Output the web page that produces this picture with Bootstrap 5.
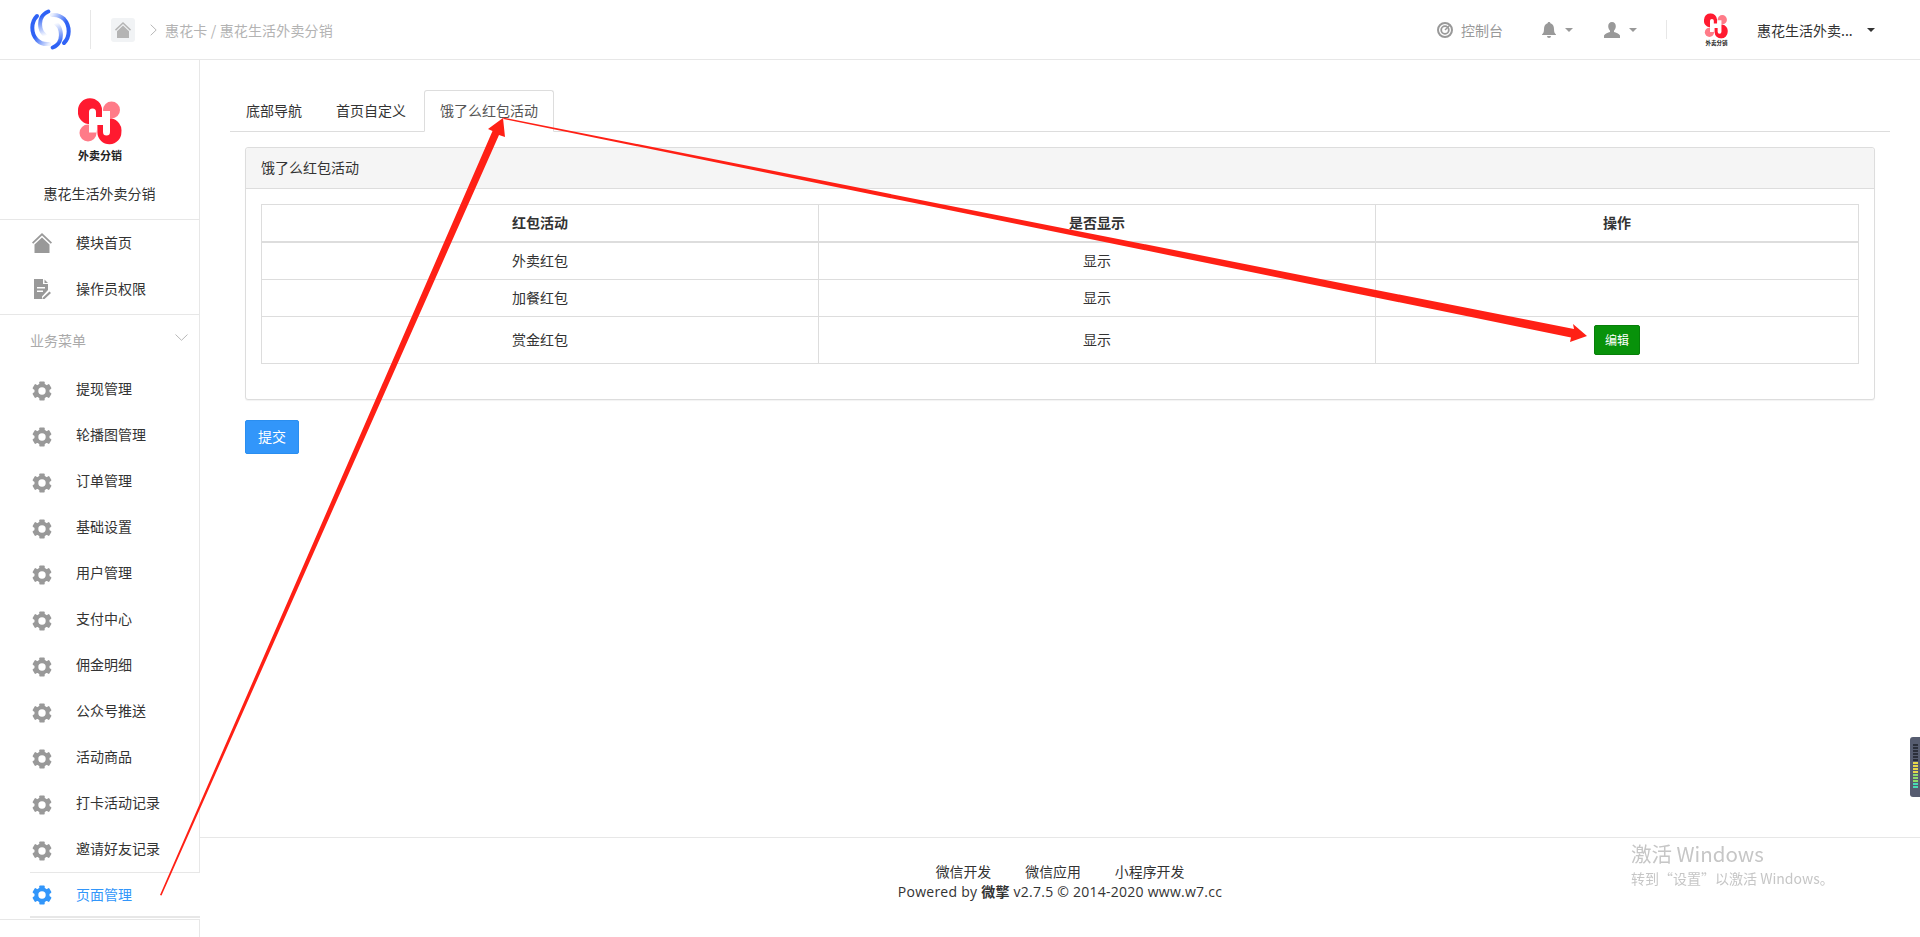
<!DOCTYPE html>
<html lang="zh-CN">
<head>
<meta charset="utf-8">
<title>饿了么红包活动</title>
<link href="https://cdn.jsdelivr.net/npm/bootstrap@5.3.0/dist/css/bootstrap.min.css" rel="stylesheet">
<style>
html,body{height:100%;overflow:hidden}
body{font:14px/20px "Noto Sans CJK SC","Liberation Sans",sans-serif;color:#333;background:#fff}
.top-bar{height:60px;border-bottom:1px solid #e7e7e7;padding:0;flex-wrap:nowrap;justify-content:flex-start}
.brand-wrap{width:61px;height:39px;margin-left:30px;border-right:1px solid #e7e7e7;flex:none}
.home-box{width:24px;height:24px;background:#f1f3f5;border-radius:3px;margin-left:20px}
.crumb{color:#b3b3b3;margin-left:8px;letter-spacing:.15px}
.chev{margin-left:15px}
.top-right{margin-left:auto;padding-right:45px}
.top-link{color:#999;font-size:14px}
.bell-ic{margin-left:39px}
.user-ic{margin-left:31px}
.tiny-caret{width:0;height:0;border-left:4px solid transparent;border-right:4px solid transparent;border-top:4px solid #999;margin-left:9px}
.tiny-caret.dark{border-top-color:#333;margin-left:15px}
.vsep{width:1px;height:19px;background:#e7e7e7;margin:0 36px 0 29px}
.acct-logo{width:27px;height:34px;position:relative}
.acct-name{margin-left:27px;width:95px;white-space:nowrap}
.shell{height:877px}
.side{width:200px;flex:none;display:flex;flex-direction:column}
.side-head{height:160px;border-right:1px solid #e7e7e7;border-bottom:1px solid #e7e7e7;padding-top:38px;text-align:center}
.side-logo{display:block;margin:0 auto 19px}
.side-top{height:95px;border-right:1px solid #e7e7e7;border-bottom:1px solid #e7e7e7}
.side-row{height:46px;display:flex;align-items:center;padding:0 0 2px 32px;color:#333;text-decoration:none}
.side-row svg{width:20px;height:20px;flex:none;margin-right:24px;fill:#999}
.side-top svg{margin-top:2px}
.side-group{height:51px;padding:15px 11px 0 30px;color:#aaa;border-right:1px solid #e7e7e7}
.side-list{border-right:1px solid #e7e7e7;height:506px}
.side-list svg{margin-top:5px}
.side-active{margin-left:30px;padding-left:2px;height:46px;border-top:1px solid #e7e7e7;border-bottom:2px solid #e7e7e7;color:#3296fa}
.side-active svg{fill:#3296fa;margin-top:3px}
.side-tail{flex:1;border-top:1px solid #e7e7e7;border-right:1px solid #e7e7e7;margin-top:1px}
.main-col{flex:1;min-width:0;display:flex;flex-direction:column}
.main-body{flex:1;padding:30px 30px 0 30px}
.tabs-bar{border-bottom:1px solid #ddd;margin-bottom:15px}
.tabs-bar .nav-link{padding:9px 15px 11px;margin-right:2px;margin-bottom:-1px;color:#333;border:1px solid transparent;border-radius:3px 3px 0 0;line-height:20px;height:42px}
.tabs-bar .nav-link.active{color:#555;border-color:#ddd #ddd #fff}
.tab-panel{margin:0 15px;border:1px solid #ddd;border-radius:3px;box-shadow:0 1px 1px rgba(0,0,0,.05)}
.tab-panel .card-header{background:#f5f5f5;border-bottom:1px solid #ddd;padding:9px 15px 11px;height:41px;line-height:20px;border-radius:3px 3px 0 0}
.tab-panel .card-body{padding:15px}
.act-table{margin-bottom:20px;table-layout:fixed;border-color:#ddd;color:#333;text-align:center}
.act-table th,.act-table td{padding:7px 8px 9px;line-height:20px;vertical-align:middle;border:1px solid #ddd;font-size:14px}
.act-table thead th{border-bottom:2px solid #ddd;font-weight:700}
.act-table td.edit-cell{padding:8px}
.c-a,.c-b{width:557px}
.edit-btn{background:#08920a;border:1px solid #077f09;color:#fff;font-size:12px;line-height:18px;padding:5px 10px;border-radius:2px}
.save-btn{background:#3296fa;border:1px solid #2a8ef0;color:#fff;font-size:14px;line-height:20px;padding:5px 12px 7px;border-radius:2px;margin:20px 0 0 15px;height:34px}
.foot{height:100px;border-top:1px solid #e7e7e7;text-align:center;padding-top:23px;font-family:"Open Sans","Noto Sans CJK SC",sans-serif;position:relative}
.foot-links{gap:34px;height:21px;line-height:20px;font-family:"Noto Sans CJK SC",sans-serif;font-size:13.9px;padding-left:0}
.foot-links a{color:#333;text-decoration:none}
.foot-copy{font-size:14px;letter-spacing:.25px}
.mark-layer{position:fixed;left:0;top:0;pointer-events:none}
.activate{position:fixed;left:1631px;top:840px;color:#c6c6c6;pointer-events:none}
.activate b{display:block;font-weight:400;font-size:20.5px;line-height:26px}
.activate span{display:block;font-size:14px;line-height:20px;margin-top:2px}
.meter{position:fixed;left:1910px;top:737px;width:10px;height:60px;background:#565c70;border-radius:3px 0 0 3px;padding:7px 2px 7px 3px;display:flex;flex-direction:column;gap:1px}
.meter i{display:block;height:2px;flex:none;background:#2b2f3b}
.meter i.y{background:#e6d84a}
.meter i.g{background:#8fdc6a}
.meter i.t{background:#47dcb4}
.logo-cap{font-size:11px;font-weight:700;fill:#222;font-family:"Noto Sans CJK SC",sans-serif}
.logo-cap-s{font-size:5.5px;font-weight:700;fill:#222;font-family:"Noto Sans CJK SC",sans-serif}
</style>
</head>
<body>
<svg width="0" height="0" class="d-block position-absolute">
<defs>
<symbol id="gear" viewBox="0 0 20 20">
  <circle cx="10" cy="10" r="7.600"/>
  <rect x="7.300" y=".4" width="5.400" height="4" rx=".8"/>
  <rect x="7.300" y=".4" width="5.400" height="4" rx=".8" transform="rotate(60 10 10)"/>
  <rect x="7.300" y=".4" width="5.400" height="4" rx=".8" transform="rotate(120 10 10)"/>
  <rect x="7.300" y=".4" width="5.400" height="4" rx=".8" transform="rotate(180 10 10)"/>
  <rect x="7.300" y=".4" width="5.400" height="4" rx=".8" transform="rotate(240 10 10)"/>
  <rect x="7.300" y=".4" width="5.400" height="4" rx=".8" transform="rotate(300 10 10)"/>
  <circle cx="10" cy="10" r="3.700" fill="#fff"/>
</symbol>
<symbol id="house" viewBox="0 0 20 20"><path d="M10 0 20 9.500l-1.200 1.300L10 2.500 1.200 10.800 0 9.500z"/><path d="M10 4.500 17.500 11.500V20h-15v-8.500z"/></symbol>
<symbol id="doc" viewBox="0 0 20 20"><path fill-rule="evenodd" d="M2 0h9v5h5v6l-6 6.500V20H2zM5 8v1.500h8V8zM5 11.500V13h6v-1.500z"/><path d="M12.500 .5 16 4h-3.500zM17.500 12.500l1.500 1.500-7 6.500h-1.500V19z"/></symbol>
<symbol id="flower" viewBox="0 0 44 47">
  <circle cx="33.500" cy="12" r="8.500" fill="#ff7b88"/>
  <circle cx="10" cy="35" r="8.500" fill="#ff7b88"/>
  <path d="M0 12.500A12 12 0 0 1 24 12V26H10A12 12 0 0 1 0 12.500z" fill="#ff1a30"/>
  <path d="M43.400 34A12 12 0 0 1 19.400 34.600V20.600H33.400A12 12 0 0 1 43.400 34z" fill="#ff1a30"/>
  <path d="M11 27V14a3.500 3.500 0 0 1 7 0v5h7v-6h7v21a3.500 3.500 0 0 1-7 0v-7h-7v7.500h-7z" fill="#fff"/>
</symbol>
<linearGradient id="sw1" x1="0" y1="0" x2="1" y2="1"><stop offset=".45" stop-color="#2f62f5"/><stop offset="1" stop-color="#2f62f5" stop-opacity=".1"/></linearGradient>
<linearGradient id="sw2" x1="0.500" y1="0" x2="0.600" y2="1"><stop offset=".15" stop-color="#2f62f5"/><stop offset="1" stop-color="#2f62f5" stop-opacity="0"/></linearGradient>
<g id="swirl-half" fill="none" stroke-linecap="round" stroke-width="4">
  <path d="M7 7C1 13 .5 24 7 31c3 3 7.500 4.500 12 4" stroke="url(#sw1)"/>
  <path d="M18.300 2.500C12 5 9 11 10.500 19c.5 3 2.500 6 5 8" stroke="url(#sw2)"/>
</g>
</defs>
</svg>

<nav class="navbar top-bar bg-white d-flex align-items-center">
  <div class="brand-wrap d-flex align-items-center">
    <svg width="41" height="41" viewBox="0 0 41 41">
      <use href="#swirl-half"/>
      <use href="#swirl-half" transform="rotate(180 20.500 20.500)"/>
    </svg>
  </div>
  <div class="home-box d-flex align-items-center justify-content-center">
    <svg width="16" height="16" fill="#b4b4b4"><use href="#house"/></svg>
  </div>
  <svg class="chev" width="7" height="12" viewBox="0 0 7 12" fill="none" stroke="#b8b8b8"><path d="M.7.700 6.200 6 .7 11.300"/></svg>
  <span class="crumb">惠花卡 / 惠花生活外卖分销</span>
  <div class="top-right d-flex align-items-center">
    <svg width="16" height="16" viewBox="0 0 16 16" class="me-2"><circle cx="8" cy="8" r="7" fill="none" stroke="#999" stroke-width="2"/><circle cx="8" cy="8" r="3.800" fill="none" stroke="#999" stroke-width="1.800"/><path d="M8 8 13 3" stroke="#999" stroke-width="1.500"/></svg>
    <span class="top-link">控制台</span>
    <svg width="14" height="16" viewBox="0 0 14 16" fill="#999" class="bell-ic"><path d="M7 0c.8 0 1.300.5 1.400 1.200C10.800 2 12 4 12 7c0 3 .6 4.300 2 5.500V13H0v-.5C1.400 11.300 2 10 2 7c0-3 1.200-5 3.600-5.800C5.700.500 6.200 0 7 0zM5 14h4a2 2 0 0 1-4 0z"/></svg>
    <i class="tiny-caret"></i>
    <svg width="16" height="16" viewBox="0 0 16 16" fill="#999" class="user-ic"><path d="M8 0c2.400 0 3.800 1.800 3.800 4.300 0 1.800-.8 3.400-1.800 4.400v1.300c2 .8 5 1.500 6 3.400V16H0v-2.600c1-1.900 4-2.600 6-3.400V8.700C5 7.700 4.200 6.100 4.200 4.300 4.200 1.800 5.600 0 8 0z"/></svg>
    <i class="tiny-caret"></i>
    <i class="vsep"></i>
    <svg class="acct-logo" viewBox="0 0 27 34">
      <svg x="1" y="0" width="24" height="26" viewBox="0 0 44 47"><use href="#flower"/></svg>
      <text x="13.500" y="32" text-anchor="middle" class="logo-cap-s">外卖分销</text>
    </svg>
    <span class="acct-name">惠花生活外卖...</span>
    <i class="tiny-caret dark"></i>
  </div>
</nav>

<div class="shell d-flex">
  <aside class="side">
    <div class="side-head">
      <svg class="side-logo" width="46" height="66" viewBox="-1 0 46 66">
        <use href="#flower" width="44" height="47"/>
        <text x="22" y="62" text-anchor="middle" class="logo-cap">外卖分销</text>
      </svg>
      <div>惠花生活外卖分销</div>
    </div>
    <div class="side-top">
      <a class="side-row" href="#"><svg><use href="#house"/></svg>模块首页</a>
      <a class="side-row" href="#"><svg><use href="#doc"/></svg>操作员权限</a>
    </div>
    <div class="side-group d-flex justify-content-between">
      <span>业务菜单</span>
      <svg width="13" height="7" viewBox="0 0 13 7" fill="none" stroke="#b8b8b8" class="mt-1"><path d="M.5.500 6.500 6.300 12.500.500"/></svg>
    </div>
    <div class="side-list">
      <a class="side-row" href="#"><svg><use href="#gear"/></svg>提现管理</a>
      <a class="side-row" href="#"><svg><use href="#gear"/></svg>轮播图管理</a>
      <a class="side-row" href="#"><svg><use href="#gear"/></svg>订单管理</a>
      <a class="side-row" href="#"><svg><use href="#gear"/></svg>基础设置</a>
      <a class="side-row" href="#"><svg><use href="#gear"/></svg>用户管理</a>
      <a class="side-row" href="#"><svg><use href="#gear"/></svg>支付中心</a>
      <a class="side-row" href="#"><svg><use href="#gear"/></svg>佣金明细</a>
      <a class="side-row" href="#"><svg><use href="#gear"/></svg>公众号推送</a>
      <a class="side-row" href="#"><svg><use href="#gear"/></svg>活动商品</a>
      <a class="side-row" href="#"><svg><use href="#gear"/></svg>打卡活动记录</a>
      <a class="side-row" href="#"><svg><use href="#gear"/></svg>邀请好友记录</a>
    </div>
    <a class="side-row side-active" href="#"><svg><use href="#gear"/></svg>页面管理</a>
    <div class="side-tail"></div>
  </aside>

  <div class="main-col">
    <div class="main-body">
      <ul class="nav nav-tabs tabs-bar">
        <li class="nav-item"><a class="nav-link" href="#">底部导航</a></li>
        <li class="nav-item"><a class="nav-link" href="#">首页自定义</a></li>
        <li class="nav-item"><a class="nav-link active" href="#">饿了么红包活动</a></li>
      </ul>
      <div class="card tab-panel">
        <div class="card-header">饿了么红包活动</div>
        <div class="card-body">
          <table class="table table-bordered act-table">
            <colgroup><col class="c-a"><col class="c-b"><col></colgroup>
            <thead><tr><th>红包活动</th><th>是否显示</th><th>操作</th></tr></thead>
            <tbody>
              <tr><td>外卖红包</td><td>显示</td><td></td></tr>
              <tr><td>加餐红包</td><td>显示</td><td></td></tr>
              <tr><td>赏金红包</td><td>显示</td><td class="edit-cell"><button class="btn edit-btn" type="button">编辑</button></td></tr>
            </tbody>
          </table>
        </div>
      </div>
      <button class="btn save-btn" type="button">提交</button>
    </div>
    <footer class="foot">
      <div class="foot-links d-flex justify-content-center"><a href="#">微信开发</a><a href="#">微信应用</a><a href="#">小程序开发</a></div>
      <div class="foot-copy">Powered by <b>微擎</b> v2.7.5 © 2014-2020 www.w7.cc</div>
    </footer>
  </div>
</div>

<svg class="mark-layer" width="1920" height="937" viewBox="0 0 1920 937" fill="#ff2015">
  <path d="M160 895 161.500 895.600 499 135 505 137 503 118 488 129 492.500 131z"/>
  <path d="M503 117.500 503.500 119 1571 337.500 1570 342 1587 336 1573 324 1574 329z"/>
</svg>

<div class="activate"><b>激活 Windows</b><span>转到“设置”以激活 Windows。</span></div>
<div class="meter">
  <i></i><i></i><i></i><i></i><i></i><i></i>
  <i class="y"></i><i class="y"></i><i class="y"></i><i class="y"></i><i class="g"></i><i class="g"></i><i class="g"></i><i class="t"></i><i class="t"></i>
</div>
</body>
</html>
